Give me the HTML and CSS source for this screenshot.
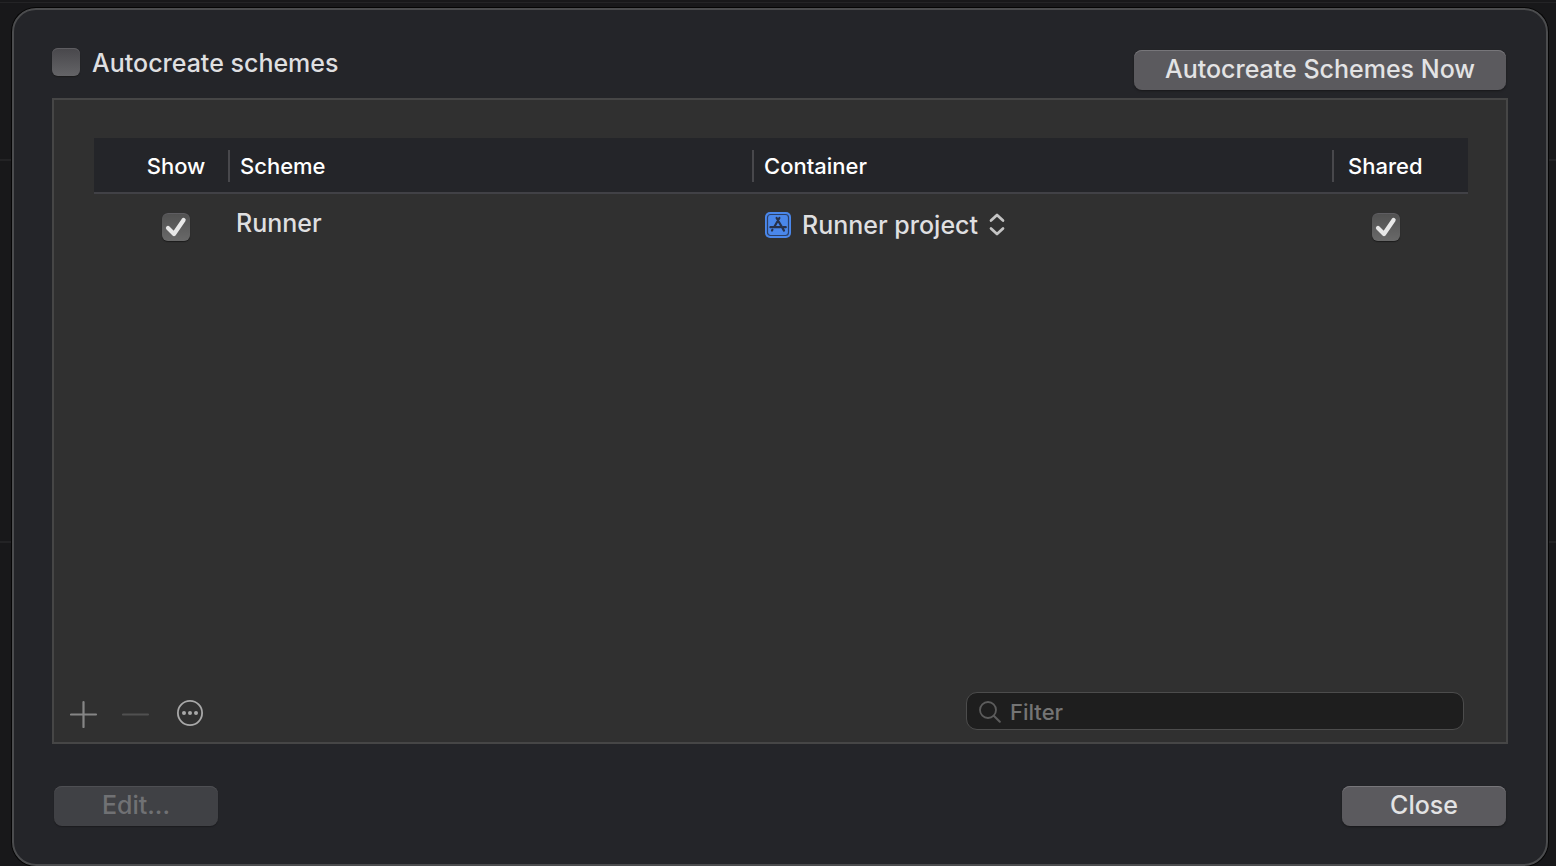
FILE: index.html
```html
<!DOCTYPE html>
<html lang="en">
<head>
  <meta charset="UTF-8">
  <meta name="viewport" content="width=device-width, initial-scale=1.0">
  <title>Manage Schemes</title>
  <link rel="stylesheet" href="styles.css">
</head>
<body>

  <main class="sheet">
    <header class="top-bar">
      <label class="auto-label">
        <input type="checkbox" class="checkbox">
        Autocreate schemes
      </label>
      <button type="button" class="btn btn-wide">Autocreate Schemes Now</button>
    </header>

    <section class="scheme-box">
      <table class="scheme-table">
        <colgroup>
          <col class="col-show">
          <col class="col-scheme">
          <col class="col-container">
          <col class="col-shared">
        </colgroup>
        <thead>
          <tr>
            <th class="cell-show">Show</th>
            <th><span class="divided">Scheme</span></th>
            <th><span class="divided">Container</span></th>
            <th><span class="divided divided-shared">Shared</span></th>
          </tr>
        </thead>
        <tbody>
          <tr>
            <td class="cell-show"><input type="checkbox" class="checkbox" aria-label="Show Runner" checked></td>
            <td class="cell-name">Runner</td>
            <td class="cell-container">
              <div class="container-picker">
                <svg width="26" height="26" viewBox="0 0 26 26" aria-hidden="true">
                  <rect width="26" height="26" rx="5" fill="#4a87ea"/>
                  <rect x="2.5" y="2.5" width="21" height="21" rx="3" fill="none" stroke="#2b3f66" stroke-width="1.2"/>
                  <path d="M11.6 6l7.4 12.6M14.4 6L9.2 15M5.4 15.2h9.8M18.4 15.2h2.4M7.4 17.8l-.4.7" fill="none" stroke="#28324a" stroke-width="2.2" stroke-linecap="round"/>
                </svg>
                <select class="container-select" aria-label="Container">
                  <option>Runner project</option>
                </select>
                <svg width="16" height="24" viewBox="0 0 16 24" aria-hidden="true">
                  <path d="M2 7.6l6-5.6 6 5.6M2 15.4l6 5.6 6-5.6" fill="none" stroke="#c4c4c4" stroke-width="2.7" stroke-linecap="round" stroke-linejoin="round"/>
                </svg>
              </div>
            </td>
            <td class="cell-shared"><input type="checkbox" class="checkbox" aria-label="Share Runner" checked></td>
          </tr>
        </tbody>
      </table>

      <div class="box-footer">
        <div class="tools">
          <button type="button" class="tool" aria-label="Add">
            <svg width="28" height="30" viewBox="0 0 28 30">
              <path d="M1 16.5h25M13.5 4v25" stroke="#858585" stroke-width="2.2" stroke-linecap="round"/>
            </svg>
          </button>
          <button type="button" class="tool" aria-label="Remove" disabled>
            <svg width="28" height="30" viewBox="0 0 28 30">
              <path d="M1 16.5h25" stroke="#505050" stroke-width="2.2" stroke-linecap="round"/>
            </svg>
          </button>
          <button type="button" class="tool" aria-label="More">
            <svg width="32" height="30" viewBox="0 0 32 30">
              <circle cx="16" cy="15" r="12.1" fill="none" stroke="#a8a8a8" stroke-width="1.8"/>
              <g fill="#a8a8a8">
                <circle cx="10" cy="15" r="2"/>
                <circle cx="16" cy="15" r="2"/>
                <circle cx="22" cy="15" r="2"/>
              </g>
            </svg>
          </button>
        </div>
        <label class="filter">
          <svg width="22" height="22" viewBox="0 0 22 22" aria-hidden="true">
            <circle cx="9" cy="9" r="8" fill="none" stroke="#5c5c5c" stroke-width="1.8"/>
            <path d="M14.8 14.8l6 6" stroke="#5c5c5c" stroke-width="2" stroke-linecap="round"/>
          </svg>
          <input type="text" class="filter-input" placeholder="Filter" aria-label="Filter">
        </label>
      </div>
    </section>

    <footer class="bottom-bar">
      <button type="button" class="btn" disabled>Edit...</button>
      <button type="button" class="btn">Close</button>
    </footer>
  </main>

</body>
</html>
```
FILE: styles.css
```css
* {
  box-sizing: border-box;
}

body {
  margin: 0;
  padding: 8px 8px 0 12px;
  min-height: 100vh;
  display: flex;
  /* faint divider lines of the window behind the sheet */
  background:
    linear-gradient(#242426, #242426) 0 2px / 100% 1px no-repeat,
    linear-gradient(#232325, #232325) 0 159px / 100% 2px no-repeat,
    linear-gradient(#232325, #232325) 0 541px / 100% 2px no-repeat,
    #18181a;
  color: #dfdfe0;
  font-family: Inter, "Liberation Sans", sans-serif;
  font-size: 25px;
  font-weight: 500;
  line-height: 30px;
}

button,
input,
select {
  font: inherit;
  color: inherit;
}

.sheet {
  flex: 1;
  display: flex;
  flex-direction: column;
  padding: 38px;
  background: #242529;
  border: 2px solid #4b4c4e;
  border-radius: 24px;
  box-shadow: 0 0 0 1px #050505;
}

.top-bar {
  display: flex;
  justify-content: space-between;
  align-items: flex-start;
  padding-right: 2px;
  margin-bottom: 8px;
}

.auto-label {
  display: flex;
  align-items: flex-start;
  gap: 12px;
}

.checkbox {
  appearance: none;
  display: block;
  flex: none;
  width: 28px;
  height: 28px;
  margin: 0;
  border-radius: 6px;
  background: linear-gradient(#48474b, #646467);
  box-shadow: inset 0 1px 0 #5e5d61, 0 1px 1px #1c1c1c;
}

.checkbox:checked {
  background: url("data:image/svg+xml,%3Csvg xmlns='http://www.w3.org/2000/svg' viewBox='0 0 28 28'%3E%3Cpath d='M6 15l6 6L21.6 7' fill='none' stroke='%23e8e8e8' stroke-width='4.2' stroke-linecap='round' stroke-linejoin='round'/%3E%3C/svg%3E"), linear-gradient(#505050, #696969);
}

.btn {
  width: 164px;
  height: 40px;
  padding: 0 0 2px;
  border: none;
  border-radius: 8px;
  background: #5b5a5e;
  box-shadow: inset 0 1px 0 #77767a, 0 1px 2px #18181a;
  color: #e3e3e4;
}

.btn:disabled {
  background: #404145;
  box-shadow: inset 0 1px 0 #4e4f53, 0 1px 1px #1c1c1f;
  color: #707174;
}

.btn-wide {
  width: 372px;
  margin-top: 2px;
}

.scheme-box {
  flex: 1;
  display: flex;
  flex-direction: column;
  justify-content: space-between;
  border: 2px solid #464646;
  background: #303030;
}

.scheme-table {
  width: calc(100% - 78px);
  margin: 38px 38px 0 40px;
  table-layout: fixed;
  border-collapse: collapse;
}

.col-show {
  width: 134px;
}

.col-scheme {
  width: 524px;
}

.col-shared {
  width: 136px;
}

.scheme-table th {
  height: 55px;
  padding: 2px 0 0;
  background: #242529;
  border-bottom: 2px solid #414146;
  color: #fff;
  font-size: 22px;
  font-weight: 500;
  text-align: left;
}

.divided {
  display: block;
  padding-left: 10px;
  border-left: 2px solid #48484c;
  line-height: 32px;
}

.divided-shared {
  padding-left: 14px;
}

.scheme-table td {
  height: 64px;
  padding: 0;
}

.scheme-table .cell-show {
  padding-left: 30px;
  text-align: center;
}

.scheme-table .cell-shared {
  padding-right: 28px;
}

.cell-show .checkbox,
.cell-shared .checkbox {
  margin: 2px auto 0;
}

.scheme-table .cell-name {
  padding: 0 0 6px 8px;
}

.scheme-table .cell-container {
  padding: 0 0 2px 13px;
}

.container-picker {
  display: flex;
  align-items: center;
}

.container-select {
  appearance: none;
  margin: 0 10px 0 11px;
  padding: 0;
  border: none;
  background: none;
}

.box-footer {
  display: flex;
  justify-content: space-between;
  align-items: center;
  padding: 0 42px 12px 16px;
}

.tools {
  display: flex;
  gap: 24px;
  padding-top: 4px;
}

.tool {
  padding: 0;
  border: none;
  background: none;
}

.tool svg {
  display: block;
}

.filter {
  display: flex;
  align-items: center;
  gap: 9px;
  width: 498px;
  height: 38px;
  padding: 1px 12px 0;
  border: 1px solid #4c4c4c;
  border-radius: 11px;
  background: #1e1e1e;
  font-size: 22px;
}

.filter-input {
  flex: 1;
  min-width: 0;
  padding: 0;
  border: none;
  outline: none;
  background: none;
}

.filter-input::placeholder {
  color: #747474;
}

.bottom-bar {
  display: flex;
  justify-content: space-between;
  padding: 42px 2px 0;
}
```
